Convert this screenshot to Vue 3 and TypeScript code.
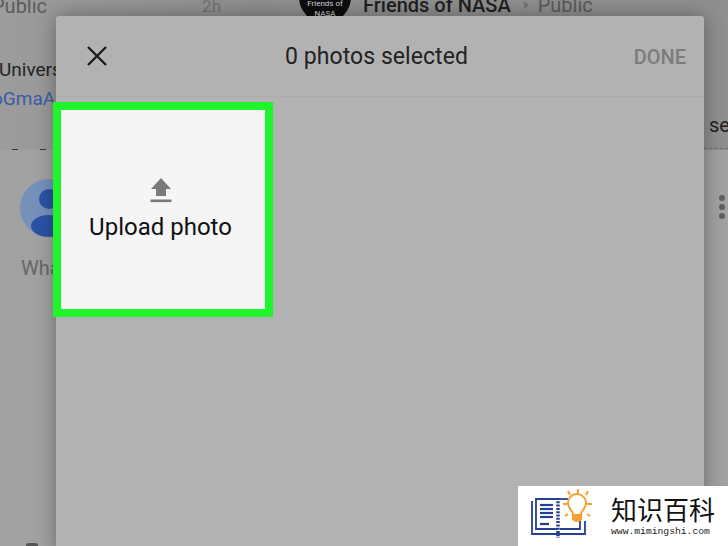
<script setup lang="ts">
const logoLines = [
  "M15 19h13",
  "M15 23h13",
  "M15 27h13",
  "M15 31h13",
  "M15 38h9",
];
</script>

<template>
  <div class="page">
    <div class="feed">
      <section class="col col-left">
        <div class="post post-left">
          <div class="post-head">
            <span class="muted-big">Public</span>
            <span class="age">2h</span>
          </div>
          <p class="body-line">University</p>
          <p class="link-line">oGmaAb</p>
          <div class="marks"><i /><i /></div>
        </div>
        <div class="composer">
          <div class="avatar">
            <svg width="58" height="58" viewBox="0 0 58 58">
              <circle cx="29" cy="29" r="29" fill="#7590bb" />
              <circle cx="29" cy="20" r="10" fill="#2b52a5" />
              <ellipse cx="29" cy="47" rx="18" ry="11" fill="#2b52a5" />
            </svg>
          </div>
          <p class="prompt">What's new?</p>
          <div class="bottom-icon" />
        </div>
      </section>

      <section class="col col-right">
        <div class="post post-right">
          <div class="post-head-right">
            <div class="nasa">
              <span>Friends of</span>
              <span>NASA</span>
            </div>
            <span class="group">Friends of NASA</span>
            <span class="caret" />
            <span class="muted-big">Public</span>
          </div>
          <p class="body-right">se</p>
          <div class="dash" />
        </div>
        <div class="composer composer-right">
          <div class="more">
            <i /><i /><i />
          </div>
        </div>
      </section>
    </div>

    <div class="modal">
      <header class="modal-head">
        <svg class="close" width="24" height="24" viewBox="0 0 24 24">
          <path d="M3 3l18 18M21 3L3 21" stroke="#1c1c1c" stroke-width="2.4" fill="none" />
        </svg>
        <span class="title">0 photos selected</span>
        <span class="done">DONE</span>
      </header>
    </div>

    <button class="upload">
      <svg width="22" height="26" viewBox="0 0 22 26">
        <path d="M11 1L21 12H16V19H6V12H1Z" fill="#7a7a7a" />
        <rect x="0.5" y="22.5" width="21" height="2.6" fill="#7a7a7a" />
      </svg>
      <span>Upload photo</span>
    </button>

    <div class="brand">
      <svg class="brand-mark" width="76" height="57" viewBox="0 0 76 57">
        <g fill="none" stroke="#24408f" stroke-width="1.800">
          <path d="M33 13H11v30h22" />
          <path d="M7 15v33h53V35" />
          <path d="M33 13h10" />
          <path d="M35 43h20v-9" />
          <path d="M33 12v40" stroke-dasharray="2 1.300" stroke-width="3.500" />
          <path v-for="line in logoLines" :key="line" :d="line" stroke-width="2.200" />
        </g>
        <g fill="none" stroke="#f5a030" stroke-width="2">
          <path d="M48 33v-5c0-3-5-5-5-11a9 9 0 0 1 18 0c0 6-5 8-5 11v5z" />
          <path d="M48 29h8v3a4 3 0 0 1-8 0z" fill="#f5a030" />
          <path d="M53 3v4M43 5l2 4M63 5l-2 4M38 18h4M62 18h5M40 30l3-2M65 30l-3-2" />
        </g>
      </svg>
      <div class="brand-text">
        <span class="brand-name">知识百科</span>
        <span class="brand-url">www.mimingshi.com</span>
      </div>
    </div>
  </div>
</template>

<style>
html,
body {
  margin: 0;
  overflow: hidden;
}
</style>

<style scoped>
.page {
  position: relative;
  width: 728px;
  height: 546px;
  overflow: hidden;
  background: #8e8e8e;
  font-family: Roboto, "Liberation Sans", sans-serif;
}

.feed {
  display: flex;
  gap: 30px;
  height: 100%;
}

.col {
  display: flex;
  flex-direction: column;
  flex-shrink: 0;
}

.col-left {
  width: 245px;
}

.col-right {
  width: 453px;
}

.post {
  flex-shrink: 0;
  height: 150px;
  box-sizing: border-box;
  background: linear-gradient(90deg, #9c9c9c, #8f8f8f);
}

.post-head {
  display: flex;
  justify-content: space-between;
  margin: -5px 24px 0 -8px;
  line-height: 22px;
}

.muted-big {
  font-size: 20px;
  color: #5b5b5b;
}

.age {
  font-size: 17px;
  color: #727272;
}

.body-line {
  margin: 41px 0 0 -1px;
  font-size: 19px;
  line-height: 24px;
  white-space: nowrap;
  color: #242424;
}

.link-line {
  margin: 5px 0 0 -8px;
  font-size: 19px;
  line-height: 24px;
  color: #3d5aa8;
}

.marks {
  display: flex;
  gap: 22px;
  margin: 38px 0 0 12px;
}

.marks i {
  width: 6px;
  height: 2px;
  background: #333;
}

.composer {
  flex: 1;
  min-height: 0;
  padding: 29px 0 0 20px;
  background: #a1a1a1;
}

.avatar {
  width: 58px;
  height: 58px;
}

.prompt {
  margin: 19px 0 0 1px;
  font-size: 20px;
  line-height: 24px;
  white-space: nowrap;
  color: #666;
}

.bottom-icon {
  width: 12px;
  height: 8px;
  margin: 263px 0 0 6px;
  border-radius: 3px 3px 0 0;
  background: #555;
}

.post-right {
  background: #8f8f8f;
}

.post-head-right {
  display: flex;
  align-items: center;
  height: 10px;
  margin-left: 24px;
}

.nasa {
  display: flex;
  flex-direction: column;
  justify-content: flex-end;
  align-items: center;
  box-sizing: border-box;
  width: 52px;
  height: 52px;
  margin: -16px 12px 0 0;
  padding-bottom: 4px;
  border-radius: 50%;
  background: #0d0d10;
  color: #d8d8d8;
  font-size: 8px;
  line-height: 10px;
}

.group {
  margin-right: 13px;
  font-size: 20px;
  font-weight: 500;
  color: #1f1f1f;
}

.caret {
  width: 0;
  height: 0;
  margin-right: 9px;
  border-left: 5px solid #757575;
  border-top: 4px solid transparent;
  border-bottom: 4px solid transparent;
}

.body-right {
  margin: 103px 0 0 434px;
  font-size: 20px;
  line-height: 24px;
  color: #222;
}

.dash {
  margin: 11px 0 0 429px;
  border-top: 1px dashed #6f6f6f;
}

.composer-right {
  position: relative;
  padding: 0;
}

.more {
  position: absolute;
  top: 45px;
  left: 444px;
  display: flex;
  flex-direction: column;
  gap: 3px;
}

.more i {
  width: 6px;
  height: 6px;
  border-radius: 50%;
  background: #5f5f5f;
}

.modal {
  position: absolute;
  top: 16px;
  left: 56px;
  width: 648px;
  height: 540px;
  border-radius: 3px;
  background: #b2b2b2;
  box-shadow: 0 0 20px rgba(0, 0, 0, 0.35);
}

.modal-head {
  position: relative;
  display: flex;
  justify-content: center;
  align-items: center;
  height: 80px;
  padding-right: 7px;
  border-bottom: 1px solid #ababab;
}

.close {
  position: absolute;
  left: 29px;
  top: 28px;
}

.title {
  font-size: 23px;
  letter-spacing: 0.06px;
  color: #222;
}

.done {
  position: absolute;
  right: 18px;
  top: 29px;
  font-size: 20px;
  font-weight: 500;
  color: #7c7c7c;
}

.upload {
  position: absolute;
  top: 102px;
  left: 53px;
  display: flex;
  flex-direction: column;
  align-items: center;
  box-sizing: border-box;
  width: 220px;
  height: 215px;
  padding: 67px 5px 0 0;
  border: 8px solid #1ef52a;
  background: #f5f5f5;
  font-family: inherit;
  font-size: 24px;
  color: #111;
}

.upload span {
  margin-top: 8px;
  line-height: 32px;
}

.brand {
  position: absolute;
  right: 0;
  bottom: 0;
  display: flex;
  align-items: flex-start;
  box-sizing: border-box;
  width: 210px;
  height: 60px;
  padding-left: 7px;
  background: #fff;
}

.brand-mark {
  flex-shrink: 0;
}

.brand-text {
  display: flex;
  flex-direction: column;
  margin: 8px 0 0 10px;
}

.brand-name {
  font-family: "Noto Sans CJK SC", sans-serif;
  font-size: 26px;
  line-height: 30px;
  color: #111;
}

.brand-url {
  margin-top: 2px;
  font-family: "Liberation Mono", monospace;
  font-size: 9.700px;
  line-height: 12px;
  color: #222;
}
</style>
